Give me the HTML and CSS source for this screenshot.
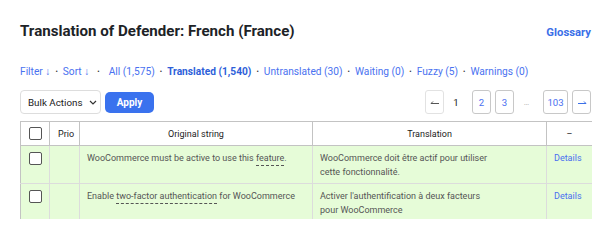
FILE: index.html
```html
<!DOCTYPE html>
<html>
<head>
<meta charset="utf-8">
<link rel="stylesheet" href="styles.css">
</head>
<body>
<div class="page">
  <div class="head">
    <h1 class="title">Translation of Defender: French (France)</h1>
    <a class="glossary">Glossary</a>
  </div>
  <div class="filters">
    <a>Filter ↓</a><span class="sep">•</span><a>Sort ↓</a><span class="sep sep-wide">•</span><a>All (1,575)</a><span class="sep">•</span><a class="current">Translated (1,540)</a><span class="sep">•</span><a>Untranslated (30)</a><span class="sep">•</span><a>Waiting (0)</a><span class="sep">•</span><a>Fuzzy (5)</a><span class="sep">•</span><a>Warnings (0)</a>
  </div>
  <div class="toolbar">
    <div class="bulk">
      <div class="select">Bulk Actions <svg class="chev" width="8" height="5" viewBox="0 0 8 5"><path d="M1 1l3 3 3-3" fill="none" stroke="#333" stroke-width="1.2"/></svg></div>
      <button class="apply">Apply</button>
    </div>
    <div class="paging">
      <span class="pbtn disabled">
        <svg width="10" height="6" viewBox="0 0 10 6"><path d="M1 4.5h8M1 4.5l2-2" fill="none" stroke="#555" stroke-width="1"/></svg>
      </span>
      <span class="pcur">1</span>
      <span class="pbtn">2</span>
      <span class="pbtn">3</span>
      <span class="pdots">…</span>
      <span class="pbtn wide">103</span>
      <span class="pbtn">
        <svg width="10" height="6" viewBox="0 0 10 6"><path d="M1 4.5h8M9 4.5l-2-2" fill="none" stroke="#3a6fe8" stroke-width="1"/></svg>
      </span>
    </div>
  </div>
  <div class="table-wrap">
    <table class="grid">
      <colgroup>
        <col class="c-check"><col class="c-prio"><col class="c-orig"><col class="c-trans"><col class="c-act">
      </colgroup>
      <thead>
        <tr>
          <th><span class="cb"></span></th>
          <th class="left">Prio</th>
          <th>Original string</th>
          <th>Translation</th>
          <th>–</th>
        </tr>
      </thead>
      <tbody>
        <tr>
          <td class="chk"><span class="cb"></span></td>
          <td></td>
          <td class="txt">WooCommerce must be active to use this <span class="term">feature</span>.</td>
          <td class="txt">WooCommerce doit être actif pour utiliser<br>cette fonctionnalité.</td>
          <td class="txt"><a class="details">Details</a></td>
        </tr>
        <tr>
          <td class="chk"><span class="cb"></span></td>
          <td></td>
          <td class="txt">Enable <span class="term">two-factor authentication</span> for WooCommerce</td>
          <td class="txt">Activer l'authentification à deux facteurs<br>pour WooCommerce</td>
          <td class="txt"><a class="details">Details</a></td>
        </tr>
      </tbody>
    </table>
  </div>
</div>
</body>
</html>
```
FILE: styles.css
```css
* { box-sizing: border-box; }
html, body { margin: 0; padding: 0; background: #fff; }
body { font-family: Roboto, "Liberation Sans", sans-serif; color: #333; }
.page { padding: 20px 19px 0 20px; width: 610px; }
.head { display: flex; justify-content: space-between; align-items: center; height: 22px; }
.title { margin: 0; font-size: 15.1px; font-weight: 700; color: #1d2327; line-height: 22px; }
.glossary { font-size: 11.3px; font-weight: 700; color: #3a6fe8; position: relative; top: 1px; }
.filters { margin-top: 23px; font-size: 10.2px; line-height: 14px; color: #4a72f0; white-space: nowrap; }
.filters a { color: #4a72f0; }
.filters a.current { font-weight: 700; color: #2e5fd9; }
.sep { color: #333; font-size: 7px; margin: 0 5px; position: relative; top: -1px; }
.sep-wide { margin: 0 9px 0 8px; }
.toolbar { margin-top: 10px; display: flex; justify-content: space-between; align-items: center; height: 24px; }
.bulk { display: flex; align-items: center; gap: 4px; }
.select { width: 81px; height: 24px; border: 1px solid #ddd; border-radius: 4px; font-size: 9.8px; color: #222; display: flex; align-items: center; padding-left: 7px; white-space: nowrap; }
.chev { margin-left: 7px; margin-top: 1px; }
.apply { width: 49px; height: 21px; border: 0; border-radius: 5px; background: #3a72ee; color: #fff; font-family: inherit; font-weight: 700; font-size: 10px; padding: 0; }
.paging { display: flex; align-items: center; font-size: 9.6px; }
.pbtn { width: 19px; height: 24px; border: 1px solid #c8c8c8; border-radius: 3px; display: flex; align-items: center; justify-content: center; color: #4a6ff0; margin-left: 4px; }
.pbtn.disabled { border-color: #e2e2e2; margin-left: 0; }
.pbtn.wide { width: 25px; }
.pcur { width: 24px; text-align: center; color: #222; }
.pdots { width: 25px; text-align: center; color: #aaa; font-size: 8px; }
.table-wrap { margin-top: 7px; width: 572px; height: 98px; overflow: hidden; }
.grid { border-collapse: collapse; width: 572px; table-layout: fixed; font-size: 9px; }
.c-check { width: 29px; } .c-prio { width: 30px; } .c-orig { width: 233px; } .c-trans { width: 234px; } .c-act { width: 46px; }
.grid th { height: 24px; border: 1px solid #c3c3c3; font-weight: 400; color: #222; text-align: center; padding: 0; }
.grid th.left { text-align: left; padding-left: 8px; }
.grid td { background: #e6fcd8; border: 1px solid #dcdcdc; vertical-align: top; height: 38px; padding: 0; color: #555; white-space: nowrap; }
.grid td:first-child { border-left-color: #c3c3c3; }
.grid td:last-child { border-right-color: #c3c3c3; }
.grid tbody tr:first-child td { border-top-color: #c3c3c3; }
.txt { padding: 5px 7px 0 7px !important; line-height: 14px; }
.chk { padding: 6px 0 0 8px !important; }
.cb { display: block; width: 13px; height: 13px; border: 1px solid #555; border-radius: 2px; background: #fff; margin: 0 auto; }
.chk .cb { margin: 0; }
.term { border-bottom: 1px dashed #555; padding-bottom: 2px; }
.details { color: #4a6ff0; }
```
